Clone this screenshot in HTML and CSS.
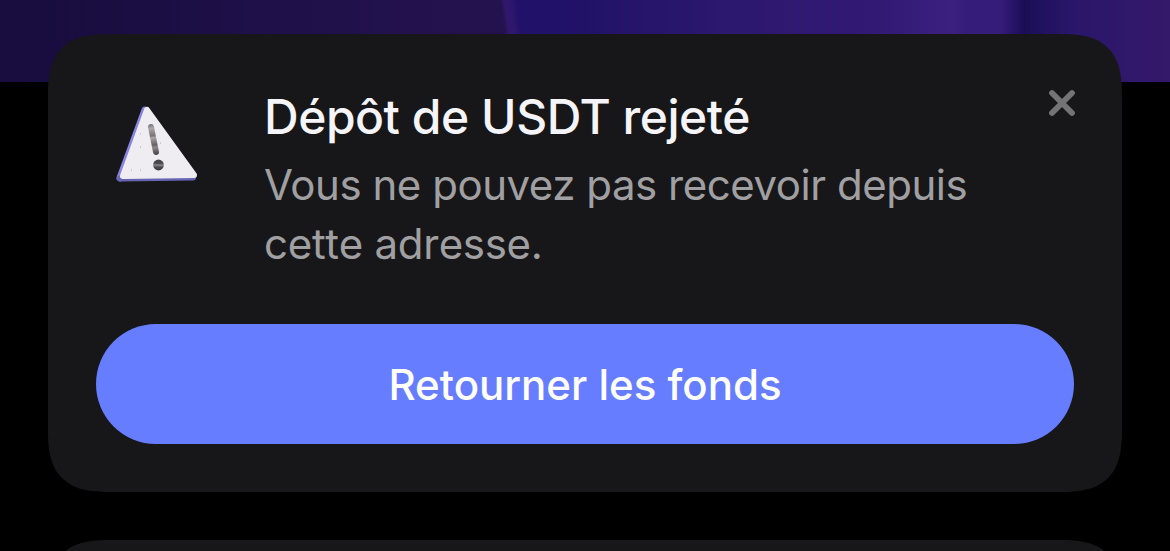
FILE: index.html
```
<!DOCTYPE html>
<html lang="fr">
<head>
    <meta charset="UTF-8">
    <meta name="viewport" content="width=device-width, initial-scale=1.0">
    <title>Dépôt de USDT rejeté</title>
    <link rel="stylesheet" href="styles.css">
</head>
<body>
    <div class="screen">
        <div class="card">
            <div class="notice">
                <svg class="warning" viewBox="0 0 84 80">
                    <path d="M30 6 L5 74" stroke="#8785e2" stroke-width="7" stroke-linecap="round"/>
                    <path d="M5 74.500 L78 73.500" stroke="#6965b5" stroke-width="6" stroke-linecap="round"/>
                    <path d="M32 6 L8 72 L79 71 Z" fill="#f0edf2" stroke="#f0edf2" stroke-width="6" stroke-linejoin="round"/>
                    <path d="M36 23 L41 48" stroke="url(#mark)" stroke-width="6" stroke-linecap="round"/>
                    <circle cx="43.500" cy="61" r="5.400" fill="url(#dot)"/>
                    <path d="M25 30h1M25 43h1M16 66h1M25 66h1M45 39h1" stroke="#aaa6c4"/>
                    <defs>
                        <linearGradient id="mark" gradientUnits="userSpaceOnUse" x1="36" y1="20" x2="40" y2="50">
                            <stop offset="0" stop-color="#777"/>
                            <stop offset="0.150" stop-color="#aaa5a9"/>
                            <stop offset="0.400" stop-color="#777377"/>
                            <stop offset="0.450" stop-color="#aaa5a9"/>
                            <stop offset="0.700" stop-color="#676468"/>
                            <stop offset="0.780" stop-color="#8d898d"/>
                            <stop offset="1" stop-color="#4b494d"/>
                        </linearGradient>
                        <linearGradient id="dot" x1="0" y1="0" x2="0" y2="1">
                            <stop offset="0" stop-color="#444246"/>
                            <stop offset="0.350" stop-color="#4b494d"/>
                            <stop offset="0.500" stop-color="#8d898d"/>
                            <stop offset="0.700" stop-color="#4b494d"/>
                            <stop offset="1" stop-color="#3b393d"/>
                        </linearGradient>
                    </defs>
                </svg>
                <div class="text">
                    <h1>Dépôt de USDT rejeté</h1>
                    <p>Vous ne pouvez pas recevoir depuis<br><span class="last-line">cette adresse.</span></p>
                </div>
                <svg class="close" viewBox="0 0 28 28">
                    <path d="M4 4 L24 24 M24 4 L4 24" stroke="#747476" stroke-width="5.800" stroke-linecap="round"/>
                </svg>
            </div>
            <button class="action">Retourner les fonds</button>
        </div>
        <div class="card next"></div>
    </div>
</body>
</html>
```
FILE: styles.css
```
body {
    background-color: #000;
    margin: 0;
    font-family: Inter, sans-serif;
}
.screen {
    box-sizing: border-box;
    height: 551px;
    padding: 34px 48px 0;
    overflow: hidden;
    background-image:
        linear-gradient(82deg, transparent 43.300%, #31186c 43.700%, #2c176c 44.200%, transparent 44.700%),
        linear-gradient(90deg, #180d3e 0%, #1a0e42 12%, #1f1049 23%, #24124f 43.300%, #21116a 43.900%, #211268 50%, #2c186e 62%, #321974 75%, #3c2080 81.500%, #351c7a 82.500%, #351c7a 85.500%, #1b0e57 87.500%, #29166a 91.500%, #31186a 97%, #34186a 100%);
    background-size: 100% 82px;
    background-repeat: no-repeat;
}
.card {
    box-sizing: border-box;
    height: 458px;
    padding: 48px;
    background-color: #171719;
    border-radius: 64px;
    corner-shape: superellipse(1.49);
}
.next {
    margin-top: 48px;
}
.notice {
    display: flex;
    height: 242px;
}
.warning {
    width: 84px;
    height: 80px;
    margin: 22px 65px 0 19px;
    fill: none;
}
.text {
    flex: 1;
}
h1 {
    margin: 4px 0 0;
    color: #f5f4f8;
    font-size: 48px;
    font-weight: 500;
    letter-spacing: -0.47px;
    line-height: 62px;
}
p {
    margin: 7px 0 0;
    color: #a0a0a2;
    font-size: 42px;
    letter-spacing: -0.47px;
    line-height: 59px;
    white-space: nowrap;
}
.last-line {
    font-kerning: none;
    letter-spacing: -0.3px;
}
.close {
    width: 28px;
    height: 28px;
    margin: 7px -2px 0 0;
}
.action {
    display: block;
    width: 100%;
    height: 120px;
    padding: 0;
    border: none;
    border-radius: 60px;
    background-color: #677dff;
    color: #fff;
    font-family: inherit;
    font-size: 42px;
    font-weight: 500;
    cursor: pointer;
}
```
